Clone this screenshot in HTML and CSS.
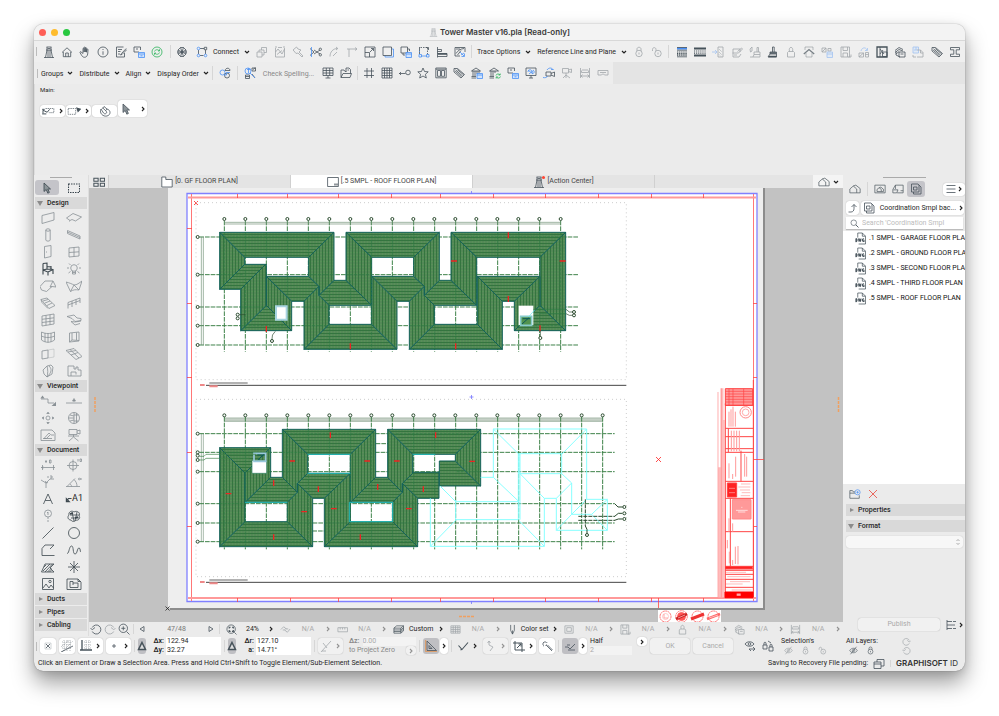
FILE: index.html
```html
<!DOCTYPE html>
<html lang="en">
<head>
<meta charset="utf-8">
<title>Tower Master v16.pla</title>
<link rel="stylesheet" href="styles.css">
</head>
<body>
<svg class="defs" aria-hidden="true">
  <defs>
    <symbol id="tower" viewBox="0 0 12 12"><path d="M3.5 1h5M4 1v3M8 1v3M3 4h6M4 4L2.5 11.5M8 4l1.500 7.500M5 4v7M7 4v7M1 11.500h10M4.500 2.500h3"/></symbol>
    <symbol id="home" viewBox="0 0 12 12"><path d="M1 6.500L6 1.800l5 4.700M2.300 6v4.700h7.400V6M4.700 10.700V7h2.600v3.700"/></symbol>
    <symbol id="hand" viewBox="0 0 12 12"><path d="M4 7.500V2.800c0-.9 1.100-.9 1.100 0V6 1.700c0-.9 1.200-.9 1.200 0V6 2.300c0-.9 1.200-.9 1.200 0V6.200l.4-2.700c.1-.8 1.200-.6 1.100.2L8.700 8c-.3 2-1.500 3.300-3.200 3.300S3 10 2.300 8.800L1 6.500c-.3-.8.600-1.100 1.100-.5z"/></symbol>
    <symbol id="info" viewBox="0 0 12 12"><circle cx="6" cy="6" r="5"/><path d="M6 5.300v3.500M6 3v1"/></symbol>
    <symbol id="edit" viewBox="0 0 12 12"><path d="M8.500 1H1.500v10h8V7M3 3.500h4M3 5.500h2.500M3 8h2M11.200 2.500L6.500 7.500 5.500 9l1.700-.7 4.600-4.700"/></symbol>
    <symbol id="link" viewBox="0 0 12 12"><path d="M6 6H1V1h6.500v3M3 3h2"/><path class="b f" d="M5.500 6.500h6v5h-6zM5.500 8h6M7.500 9.800h2"/></symbol>
    <symbol id="sync" viewBox="0 0 12 12"><g class="g"><circle cx="6" cy="6" r="5"/><path d="M3.500 5.500C4 3.500 7 3 8.300 5M8.500 3.300V5H7M8.500 6.500C8 8.500 5 9 3.700 7M3.500 8.700V7H5"/></g></symbol>
    <symbol id="globe" viewBox="0 0 12 12"><path d="M2 4l2.500-2.500h3L10 4v4l-2.500 2.500h-3L2 8zM2 4l8 4M2 8l8-4M4.500 1.500L6 6l1.500-4.500M4.500 10.500L6 6l1.500 4.500M1 6h10"/></symbol>
    <symbol id="nodes" viewBox="0 0 12 12"><path d="M4 2.500h4M9.500 4v4M4 9.500h3.500M2.500 4v4"/><g class="b"><circle cx="2.500" cy="2.500" r="1.300"/><circle cx="2.500" cy="9.500" r="1.300"/><circle cx="9.500" cy="9.500" r="1.300"/></g><path d="M8.300 1.300h2.400v2.400H8.300z"/></symbol>
    <symbol id="boxes" viewBox="0 0 12 12"><path d="M1 6h5v5H1zM3 6V4h5v5H6M5.500 4V1.500h5v5H8"/></symbol>
    <symbol id="mod" viewBox="0 0 12 12"><path d="M1.500 2v9h9V2M1.500 6L4 3l4 5 2.500-5M1 1h2M9 1h2M4 1.500h4M3 8.500l5-4"/></symbol>
    <symbol id="axe" viewBox="0 0 12 12"><path d="M1 4l3.500-3L6 3l3 1-2 2 4 4-1 1-4-4-2 .5-2-2.500z"/></symbol>
    <symbol id="cut" viewBox="0 0 12 12"><path d="M4 4l6 4M4 8l6-4M0 2.500L4 6 0 9.500" /><circle cx="10.300" cy="8.800" r="1.200"/><circle cx="10.300" cy="3.300" r="1.200"/><path class="b" d="M1.500 1v10"/></symbol>
    <symbol id="arc" viewBox="0 0 12 12"><path d="M2 10.500C2 6 5 2.500 9.500 2.500M8 1l1.800 1.500L8 4M5 10l4-4"/></symbol>
    <symbol id="corner" viewBox="0 0 12 12"><path d="M3 11V3h8M9 1.500L11 3 9 4.500M1 3h2"/></symbol>
    <symbol id="resize" viewBox="0 0 12 12"><path d="M1 1h10v10H1zM1 6.500h4.500V11M6 6l3.500-3.500M7 2.500h2.500V5"/></symbol>
    <symbol id="frame" viewBox="0 0 12 12"><path class="b" d="M3 9.500v1.500h8.500V3H9.500"/><path d="M1 1h8.500v8.500H1z"/></symbol>
    <symbol id="frame2" viewBox="0 0 12 12"><path d="M1 1h6.500v6H1zM3 7v2h2M7.500 3h2v2"/><path class="b f" d="M6 6.500h5.500v5H6zM6 8h5.500"/></symbol>
    <symbol id="bound" viewBox="0 0 12 12"><path d="M2.500 1.500h7v7" stroke-dasharray="1.500 1"/><path d="M1.500 1v7M8 1.500h2.500V4"/><path class="b" d="M3 10h6M1 8.500h2.500V11H1zM8.500 8.500H11V11H8.500zM1.500 5v1"/></symbol>
    <symbol id="move" viewBox="0 0 12 12"><path d="M2 3h7v7H2zM0 3h2M9 10h3M2 1v2M9 10v2M4 8l4-4M5.500 4H8v2.500" stroke-width="1"/></symbol>
    <symbol id="align" viewBox="0 0 12 12"><path d="M1.500 1v10.500M1.500 3.500h4v2h-4M1.500 7.500h9.500v3H1.500"/><path d="M2 8h9" stroke-width="1.500"/></symbol>
    <symbol id="trace" viewBox="0 0 12 12"><path d="M11 6V1.500H1v8.500h5M2 7.500c2-3 4-4.500 8-5M3.500 9L7 4.500M2 3h4"/><path class="b" d="M6 6l4 4M10.500 7.500v3h-3M7 9l3-2"/></symbol>
    <symbol id="lock" viewBox="0 0 12 12"><circle cx="6" cy="7.500" r="3.200"/><path d="M4 5V3c0-2.300 4-2.300 4 0v2M6 6.500v2"/></symbol>
    <symbol id="unlock" viewBox="0 0 12 12"><circle cx="7" cy="7.500" r="3.200"/><path d="M5 5V3.500c0-2.500-3.500-2.500-3.500 0V5M7 6.500v2"/></symbol>
    <symbol id="hatch1" viewBox="0 0 12 12"><path class="b" d="M1 2.500h10" stroke-width="2"/><path d="M1 1.500h10M1 4.200h10M1 10.800h10"/><path d="M1 6h10M1 7.600h10M1 9.200h10" stroke-width="1.200" stroke-dasharray="1.300 .8"/></symbol>
    <symbol id="hatch2" viewBox="0 0 12 12"><path d="M0 2.500h12M0 9.500h12" stroke-width="1.800"/><path d="M0 5h12M0 7.200h12" stroke-width="1.200" stroke-dasharray="1 .9"/></symbol>
    <symbol id="door" viewBox="0 0 12 12"><path d="M6 1h5v10H6z"/><path d="M7 3l3 3M7 6l3 3M7 8.500l2 2" stroke-dasharray="1 .8"/><path class="b" d="M0 6h5M3 4l2 2-2 2"/></symbol>
    <symbol id="note" viewBox="0 0 12 12"><path d="M2 3h7v3M2 3v8h6l2-3M1.500 7h6l4-4-1-1-4 3.500M3 9h3"/></symbol>
    <symbol id="brushes" viewBox="0 0 12 12"><path d="M1 3l2-2v4l-1.500 1zM5 6h6v2.500H5zM8 6V1.500h1.500V6M5 8.500L4 11h7V8.500M1 11h3"/></symbol>
    <symbol id="brush" viewBox="0 0 12 12"><path d="M3 6h6.500v2H3zM5.500 6V1h1.700v5M3 8L1 11h8.500V8"/><path d="M1.500 10.500h8M3 7h6" stroke-width="1.500"/></symbol>
    <symbol id="person" viewBox="0 0 12 12"><path d="M2.500 11V6.500l1-1h5l1 1V11z"/><path d="M4.500 5.500C3 0 9 0 7.500 5.500"/></symbol>
    <symbol id="roof" viewBox="0 0 12 12"><path d="M2 1h8M2 1v3M10 1v3M3 7v4h6V7" stroke-opacity=".6"/><path d="M.8 8L6 3.500 11.200 8" stroke-width="1.300"/></symbol>
    <symbol id="units" viewBox="0 0 12 12"><path d="M1 2h4v4H1zM1 6l4-4M7 5V2.500h3V5z"/><path class="b f" d="M6 6h5.500v5.500H6zM6 8h5.500"/></symbol>
    <symbol id="disk" viewBox="0 0 12 12"><path d="M1 1h8.500v10H1zM3 1v3.500h4.500V1M3 11V7h4.500v4M11 8.500V11H8.500"/></symbol>
    <symbol id="swap" viewBox="0 0 12 12"><path d="M1 7h4.500v4H1zM1 11l4.500-4M7.500 6.500h3V11h-3zM7.500 8.500h3"/><path class="b" d="M3 5C4 1 8 1 9 4M9.500 2v2.500H7"/></symbol>
    <symbol id="photo" viewBox="0 0 12 12"><path d="M1 1h10v10H1z" stroke-width="1.300"/><path d="M4 1v10M4 3l4 5M4 8L7 4M6.500 6h4.500v4.500H6.500z"/></symbol>
    <symbol id="stack" viewBox="0 0 12 12"><path d="M1 4.500L5 1.500l4 2M1 6.500l4-3 4 1.500M2 8l3-2.500M2 5v4l4 2M5 6h6v5H5zM6.500 8h3"/></symbol>
    <symbol id="docs" viewBox="0 0 12 12"><path class="b f" d="M1 1h5.500v6H1zM4 1v3M2 4h3"/><path d="M5 4h3.500L11 6.500V11H5M8.500 4v3H11M1 9v2h3"/></symbol>
    <symbol id="clip" viewBox="0 0 12 12"><path d="M1 1.500h3.500l7 6-3.500 3.500L1 5zM2.500 2.800l7 6.200M4.200 2.500L10.800 8M2.200 4.200L8.500 9.800"/></symbol>
    <symbol id="ibeam" viewBox="0 0 12 12"><path d="M1.500 1.500h9v2.300H7.200v4.400h3.300v2.300h-9V8.200h3.300V3.800H1.500z"/></symbol>
    <symbol id="rings" viewBox="0 0 12 12"><path d="M6 3.500h5C11 1 7 0 6 3.500z"/><circle class="b" cx="3.500" cy="5.500" r="2.500"/><circle cx="8" cy="8.500" r="2.500"/><path class="b" d="M5 8h2.500V5.500H11"/></symbol>
    <symbol id="find" viewBox="0 0 12 12"><path d="M8 1h3.500v3H8zM9 2.500l2.500-2M1.500 8h4v3.500h-4zM1.500 9.500h4M8 7l3 4"/><path class="b" d="M3 2.500h3M4.500 1v5"/><circle class="b" cx="4" cy="4" r="3"/><path class="b" d="M6 6l5 5"/></symbol>
    <symbol id="board" viewBox="0 0 12 12"><path d="M1 1h10v7.500H1zM1 3.500h10M1 6h10M4.300 1v7.500M7.700 1v7.500M6 8.500V11M3.500 11h5"/></symbol>
    <symbol id="folder" viewBox="0 0 12 12"><path d="M1 10.500V3h3l1 1.500h1.500M1 10.500L3 6.500h8.500L10 10.500zM6 4.500V1h3l1.500 1.500v4M7.500 3h1.500"/></symbol>
    <symbol id="hash" viewBox="0 0 12 12"><path d="M1 4h10M1 8.500h10M4 1v10M8.500 1v10"/></symbol>
    <symbol id="grid" viewBox="0 0 12 12"><path d="M1 1h10v10H1zM1 3.500h10M1 6h10M1 8.500h10M3.500 1v10M6 1v10M8.500 1v10"/></symbol>
    <symbol id="guide" viewBox="0 0 12 12"><circle cx="9" cy="5.500" r="2.300"/><path d="M0 6.500h6.500M2 5L.5 6.500 2 8"/></symbol>
    <symbol id="star" viewBox="0 0 12 12"><path d="M6 1l1.500 3.500 3.700.3-2.800 2.500.9 3.700L6 9l-3.300 2 .9-3.700L.8 4.800l3.700-.3z"/></symbol>
    <symbol id="cols" viewBox="0 0 12 12"><path d="M.8 1h10.400v9.800H.8zM2.500 3.500h3v5.800h-3zM6.500 3.500h3v5.800h-3zM1 2.200h10"/></symbol>
    <symbol id="bank" viewBox="0 0 12 12"><path d="M.5 4L5 1l4.500 3zM2 4v5M4 4v5M6 4v3M8 4v2M.5 9.500H5M.5 11H5"/><path class="b f" d="M6 6.500h5.500v5H6zM6 8h5.500"/></symbol>
    <symbol id="bank2" viewBox="0 0 12 12"><path d="M.5 4L5 1l4.500 3zM2 4v5M4 4v5M6 4v2M.5 9.500H5M.5 11H5"/><path class="g" d="M7 8.500c.5-2 3-2 4-.5M11.200 6.500V8H9.500M11.500 9.500c-.5 2-3 2-4 .5M7.200 11.500V10H9"/></symbol>
    <symbol id="screen" viewBox="0 0 12 12"><path d="M1 1h10v7.500H1zM4 11h4M6 8.500V11" /><path class="b" d="M3 5c0-3 4-3 4 0s3 1 2-1M4 7l5-4M3 3l5 4"/></symbol>
    <symbol id="cam" viewBox="0 0 12 12"><path d="M3 5h5v4H3zM8 6.500L11.500 5v4.500L8 8"/><path class="b" d="M4 3c2-3 5-2 6-.5M0 10.500c2 .5 4 0 4.500-1.500M8 2.500h2.500"/></symbol>
    <symbol id="tripod" viewBox="0 0 12 12"><path d="M1.500 1.500h6v4.500h-6zM7.500 3l3-1v3.500l-3-1M5 6v2M5 8L2 11M5 8l4 3M5 8v3"/></symbol>
    <symbol id="width" viewBox="0 0 12 12"><path d="M1.500 1v10M10.500 1v10M3 3h6M1.500 9h9M3.500 7.500L2 9l1.500 1.500M8.500 7.500L10 9l-1.500 1.500M2.500 3.500v2h7v-2"/></symbol>
    <symbol id="vr" viewBox="0 0 12 12"><path d="M1 3.500h10v4.500H7.500L6.500 7h-1l-1 1H1zM3 5.500h6"/></symbol>
    <symbol id="chev" viewBox="0 0 6 6"><path d="M1 2l2 2 2-2" stroke-width="1.200"/></symbol>
    <symbol id="chevr" viewBox="0 0 6 6"><path d="M2 1l2 2-2 2" stroke-width="1.100"/></symbol>
    <symbol id="arrow" viewBox="0 0 12 12"><path d="M3 1v8.500l2.200-2 1.600 3.700 1.600-.8L6.800 7H9.500z" fill="#8d9599"/></symbol>
    <symbol id="marq" viewBox="0 0 12 12"><path d="M0.500 2h11v8.500h-11z" stroke-dasharray="1.500 1" stroke-width="1.100"/></symbol>
    <symbol id="selmode" viewBox="0 0 16 12"><path d="M5 3h10v5H9" stroke-dasharray="1.700 .8"/><path d="M1 9.500h5M1 4h3M2 9V5l5 2.500L10 4" stroke-width="1.200"/></symbol>
    <symbol id="selmarq" viewBox="0 0 16 12"><path d="M1 3h9v7H1z" stroke-dasharray="1.700 1"/><path d="M12 3l3 1-2 2z" stroke-width="2"/></symbol>
    <symbol id="magnet" viewBox="0 0 12 12"><path d="M2 4c-2 4 2 8 6 7s4-6 0-7L5 1.500 3.800 3 7 6c2 2-1 4-2.500 2L2 4M4 2.800l-1 1M8 4L7 5.500"/></symbol>
    <symbol id="views" viewBox="0 0 14 12"><path d="M1 1.500h5v3.500H1zM8.500 1.500h5v3.500h-5zM1 7.500h5V11H1zM8.500 7.500h5V11h-5z" stroke-width="1.200"/></symbol>
    <symbol id="plan" viewBox="0 0 12 12"><path d="M.8 1h4v2.500h6.400V11H.8z" fill="#fff"/></symbol>
    <symbol id="layout" viewBox="0 0 12 12"><path d="M.6 1.500h10.800v9H.6z"/><path d="M7 8.500h4" stroke-width="2.200" stroke-opacity=".6"/></symbol>
    <!-- design tools -->
    <symbol id="wall" viewBox="0 0 16 14"><path d="M2 4.500l12-3v7.500L2 12.500z"/></symbol>
    <symbol id="slab" viewBox="0 0 16 14"><path d="M.5 7L7 2.500l8.500 3.500-6 4-3.500-1.500-2 1zM3.500 9.500v1"/></symbol>
    <symbol id="column" viewBox="0 0 16 14"><ellipse cx="8" cy="2" rx="2.200" ry="1.200"/><path d="M5.800 2v10c0 1.500 4.400 1.500 4.400 0V2"/></symbol>
    <symbol id="beam" viewBox="0 0 16 14"><path d="M1.500 2.500L14 8v3L1.500 5.500zM1.500 4L14 9.500"/></symbol>
    <symbol id="doorT" viewBox="0 0 16 14"><path d="M4.500 1.500l6.500-1v11l-6.500 1.500zM6 7h1"/></symbol>
    <symbol id="window" viewBox="0 0 16 14"><path d="M3 3l10-1v9L3 12zM8 2.500v9M3 7.500l10-.7"/></symbol>
    <symbol id="chair" viewBox="0 0 16 14"><path d="M3 1.500L7 1v6l6 .5V12M3 1.500V12.500M3 8l5 2v3.500M7 7L3 8M8 10l5-2.500M11 4v3M7 4.500l4 .5" stroke-width="1.100"/></symbol>
    <symbol id="lamp" viewBox="0 0 16 14"><circle cx="8" cy="6" r="3.300"/><path d="M6.500 9v3h3V9M6.500 10.500h3M1 6h2M13 6h2M3 1.500l1.500 1.500M13 1.500L11.500 3M2.500 11l2-1.500M13.500 11l-2-1.500"/></symbol>
    <symbol id="roofT" viewBox="0 0 16 14"><path d="M0 7.500L5 2h8l3 6-4-.5L6.500 12.500 1.500 11zM13 2l-3 6 2-.5"/></symbol>
    <symbol id="shell" viewBox="0 0 16 14"><path d="M0 3c4 1 6 2 8 3 3 0 5-2 8-4l-3 9L8 6 4.500 12.500zM4.500 12.500c3-2 5-2 8.500-1.500"/></symbol>
    <symbol id="stair" viewBox="0 0 16 14"><path d="M1 3.500L7 2l8 7.500-6 3zM3 5l5-1.500M5 7l5-2M7 9.500l5-2.500M1 3.500l1 3 6 6"/></symbol>
    <symbol id="rail" viewBox="0 0 16 14"><path d="M2 6.500L14 2v5M2 6.500v6M2 9l12-4.500M6 5v6M10 3.500v5.500"/></symbol>
    <symbol id="curtain" viewBox="0 0 16 14"><path d="M2 3l12-2v10L2 13zM6 2.300v10M10 1.700v10M2 6.300l12-1.500M2 9.500L14 8"/></symbol>
    <symbol id="zone" viewBox="0 0 16 14"><path d="M1 3.500L8 2l3 3 4 .5v2L9 8.500 6 5.500zM5 8.500l4 .5 6-1M5 8.500l4 3.500 5-1.500"/></symbol>
    <symbol id="curt2" viewBox="0 0 16 14"><path d="M1.500 2c4 2 9 2 13 0v8c-4 3-9 3-13 0zM5 3v9M8 3.500v9M11 3v9M1.500 6c4 2 9 2 13 0"/></symbol>
    <symbol id="open" viewBox="0 0 16 14"><path d="M3.500 3L13 2v9l-9.500 1zM6 3v7l7 .5M6 10l-2.500 2M10.500 2.500V10"/></symbol>
    <symbol id="panel" viewBox="0 0 16 14"><path d="M2 4l6-1v8l-6 1z"/><path d="M8 3l6-1v8l-6 1" stroke-opacity=".4"/></symbol>
    <symbol id="mesh" viewBox="0 0 16 14"><path d="M0 3.500l8-2 8 8-6 3zM4 2.500l9 8.500M2 5l8-1.500M5 8l7-2.500"/></symbol>
    <symbol id="morph" viewBox="0 0 16 14"><path d="M3 6l4-4 4-1 2 2-1 7-5 3-3-3zM7 2c1 4 1 7 0 11M9 2c3 3 3 6-2 11"/></symbol>
    <symbol id="obj" viewBox="0 0 16 14"><path d="M2 2h6v3h2V3h2v3h3v6H2zM5 8v4M5 8h5v2.500"/></symbol>
    <symbol id="section" viewBox="0 0 16 14"><path d="M1 5h7v4h6"/><path d="M1.500 4h2L2.500 2.500zM13 11.500h2.500v-2.500z" stroke-width="1.200"/></symbol>
    <symbol id="elev" viewBox="0 0 16 14"><path d="M0 9h16M6.500 7h3L8 4.500z"/><path d="M7 6.500h2" stroke-width="1.500"/></symbol>
    <symbol id="inter" viewBox="0 0 16 14"><circle cx="8" cy="7" r="2"/><path d="M2 7h1.500M12.500 7H14M8 1v2M8 11v2M3.500 5.800v2.400L2.300 7zM12.500 5.800v2.400L13.700 7zM6.800 2.500h2.400L8 1.300zM6.800 11.500h2.400L8 12.700z"/></symbol>
    <symbol id="ballT" viewBox="0 0 16 14"><circle cx="8" cy="7" r="5.500"/><path d="M8 1.500v11M2.500 7H8M4 4l4 1M4 10l4-1M8 4h4.500M8 10h4.500M10.500 2v10"/></symbol>
    <symbol id="detail" viewBox="0 0 16 14"><path d="M1 2h11l3 3v7.500H1zM4 10.500L9 5l1.500 1.500-4 4zM3 10.500h9M11 7h3"/></symbol>
    <symbol id="camT" viewBox="0 0 16 14"><path d="M3 1.500h8v5H3zM11 3l3-1v4l-3-1M2 8h11M7.500 6.500V9L3 13M7.500 9l5 4"/></symbol>
    <symbol id="dim" viewBox="0 0 16 14"><path d="M1 9.500h14M2.500 7v5M13.500 7v5M5 3.500h2M6 2v3M9.500 2v3h1.500V2zM3 10.500l-1-1 1-1"/></symbol>
    <symbol id="level" viewBox="0 0 16 14"><circle cx="7" cy="7.500" r="4"/><path d="M1 7.500h12M7 1.500v12M12 1v2.500M14 1h1.500v2.500H14z"/></symbol>
    <symbol id="radial" viewBox="0 0 16 14"><path d="M1 5l5 3M6 13V8l4-4h4M8 3V1M10 1h2v2h-2M6 8l2-.5M6 8l-.5-2"/></symbol>
    <symbol id="angle" viewBox="0 0 16 14"><path d="M0 11.500h14M1 11.500l8-8M8 4.500c2 2 3 4 3 7M4 9c1 .5 1.500 1.500 1.500 2.500M15.500 3l-2 2c-1.500 0-1.500-2 0-2l2 2"/></symbol>
    <symbol id="textT" viewBox="0 0 16 14"><path d="M3.500 12L8 2l4.500 10M5.200 8.500h5.600"/></symbol>
    <symbol id="leader" viewBox="0 0 8 14"><path d="M1.500 9.500l2.500-3h3.500M1.500 6.500v3.500h3.500z" stroke-width="1.200"/></symbol>
    <symbol id="gridT" viewBox="0 0 16 14"><circle cx="8" cy="4.500" r="3.500"/><path d="M8 3v3M7 4l1-1"/><path d="M8 8v6" stroke-dasharray="2 1"/></symbol>
    <symbol id="change" viewBox="0 0 16 14"><path d="M3 6c-1-3 3-5 5-3 3-2 7 1 5 4 2 2-1 5-3 4-1 2-4 2-5 0-3 0-4-3-2-5zM4 6h9M5 9h8M6 3l2 9M11 3l-2 9"/><path d="M4 5l3-1M9 9l3-1" stroke-width="1.800"/></symbol>
    <symbol id="line" viewBox="0 0 16 14"><path d="M2.500 12.500L13.500 1.500"/></symbol>
    <symbol id="circ" viewBox="0 0 16 14"><circle cx="8" cy="7" r="5.500"/></symbol>
    <symbol id="poly" viewBox="0 0 16 14"><path d="M2 12.500h12.500M2 12.500v-7l3-3.500h9l-4 4"/></symbol>
    <symbol id="spline" viewBox="0 0 16 14"><path d="M1 10c2 2 2-7 4.500-7s1 8 3.500 8 2-6 4-6 .5 4 2 4"/></symbol>
    <symbol id="fill" viewBox="0 0 16 14"><path d="M1.500 12L5 4h9l-4 4 4 4zM3 11l7-7M5 12l7.500-8M7.500 12l4-4M9.500 12l2-2M4 7l2-2"/></symbol>
    <symbol id="hot" viewBox="0 0 16 14"><path d="M8 1v12M2 7h12M4 3l8 8M12 3l-8 8"/></symbol>
    <symbol id="fig" viewBox="0 0 16 14"><path d="M2.500 1.500h11v11h-11zM3 11l3-4 3 4 2-3 2.500 3"/><circle cx="10" cy="4.500" r="1.200"/></symbol>
    <symbol id="draw" viewBox="0 0 16 14"><path d="M1 2h11l3 3v7.500H1zM4 4.500h3v1.500h5v4.500H4zM7 6v2M12 2v2.500h2.500"/></symbol>
    <!-- navigator -->
    <symbol id="proj" viewBox="0 0 14 12"><path d="M1 10.500V6l4-3.500L9 6v4.500zM5 2.500L8 1.500l5 4v5H9"/></symbol>
    <symbol id="vmap" viewBox="0 0 14 12"><path d="M1 1.500h12v9H1zM3.500 9V6.500l2.500-2 2.500 2V9zM6 4.500l2-.7 3 2.500V9H8.500"/></symbol>
    <symbol id="lbook" viewBox="0 0 14 12"><path d="M4 1.500h9v9H6M4 1.500L1 6.500v4h4.500L7 7H1.500M4 1.500V6M10 8h3"/></symbol>
    <symbol id="pubs" viewBox="0 0 12 12"><path d="M1.500 1h6.500l1 1v7H1.500zM3.500 9v2H11V4L9 2M3.500 4h3.500v3H3.500z"/></symbol>
    <symbol id="up" viewBox="0 0 12 12"><path d="M1.500 10h2.500c2 0 3-1.500 3-3.500V2.500M4.500 5L7 2.500 9.500 5"/></symbol>
    <symbol id="mag" viewBox="0 0 12 12"><circle cx="5" cy="5" r="3.700"/><path d="M7.800 7.800L11.300 11.300" stroke-width="1.200"/></symbol>
    <symbol id="dwg" viewBox="0 0 12 14"><path d="M3 6V1h5l3.500 3.500V13H4M8 1v3.500h3.500"/><path d="M1 7v3.500c1.500.3 1.800-3.500 0-3.500M3.800 7l.6 3.500.8-2.500.8 2.500.6-3.500M9.800 7.500C7.500 6.500 7.500 11 9.800 10.300V9H9" stroke-width="1.100"/></symbol>
    <symbol id="newf" viewBox="0 0 14 12"><path d="M7 3.500H5L4 2H1v9h11V7.500M1 5h6"/><g class="b"><circle cx="10" cy="4" r="3"/><path d="M10 2.500v3M8.500 4h3"/></g></symbol>
    <symbol id="cross" viewBox="0 0 12 12"><path d="M2 2l8 8M10 2l-8 8" stroke-width="1"/></symbol>
    <symbol id="tree" viewBox="0 0 12 12"><path d="M1 1v10M1 2.500h5M1 6h8M1 9.500h5M7 2.500h3M7 9.500h3"/></symbol>
    <symbol id="menu" viewBox="0 0 12 12"><path d="M1.500 2.500h9M1.500 6h9M1.500 9.500h9"/></symbol>
    <!-- bottom bars -->
    <symbol id="undo" viewBox="0 0 12 12"><path d="M2.300 4.500a4.500 4.500 0 1 1 0 4M.5 5.500l2 1 2.500-2"/></symbol>
    <symbol id="redo" viewBox="0 0 12 12"><path d="M9.700 4.500a4.500 4.500 0 1 0 0 4M11.500 5.500l-2 1L7 4.500"/></symbol>
    <symbol id="zin" viewBox="0 0 12 12"><circle cx="5.300" cy="5.300" r="4.200"/><path d="M8.500 8.500l3 3M3.300 5.300h4M5.300 3.300v4"/></symbol>
    <symbol id="zfit" viewBox="0 0 12 12"><circle cx="5.600" cy="5.600" r="4.600"/><path d="M9 9l2.500 2.500"/><path d="M3.500 5V3.500H5M6.500 3.500H8V5M8 6.500V8H6.500M5 8H3.500V6.500" stroke-width="1.200"/></symbol>
    <symbol id="tril" viewBox="0 0 12 12"><path d="M8 3.500v5L4 6z"/></symbol>
    <symbol id="trir" viewBox="0 0 12 12"><path d="M4 3.500v5L8 6z"/></symbol>
    <symbol id="rot" viewBox="0 0 12 12"><path d="M1 6l3-3 3 2.500M11 5.500L8 9 5 6.500M3 6.500h3M6 5l3 .5"/></symbol>
    <symbol id="ruler" viewBox="0 0 12 12"><path d="M1 4h10.500v4.500H1zM3.500 4v2M6 4v2M8.500 4v2"/></symbol>
    <symbol id="layers" viewBox="0 0 12 12"><path d="M1 4.500l3-2.500h7.500L8.500 4.500zM1 4.500V10h7.500V4.500M11.500 2v5.500L8.500 10M1 6.500h7.500l3-2.500M1 8.200h7.500l3-2.500"/></symbol>
    <symbol id="tiles" viewBox="0 0 12 12"><path d="M1 2h10v8H1zM1 4h10M1 6h10M1 8h10M3.500 2v8M8.500 2v8M6 2v8"/></symbol>
    <symbol id="pen" viewBox="0 0 12 12"><path d="M4 1v6l2 4 2-4V1M6 7v4"/></symbol>
    <symbol id="pens" viewBox="0 0 12 12"><path d="M1 2h9v8H1zM3 4h5v4H3z"/></symbol>
    <symbol id="xmark" viewBox="0 0 12 12"><path d="M4 4l4 4M8 4L4 8"/><path d="M3 3h6v6H3z" stroke-opacity=".3"/></symbol>
    <symbol id="snap" viewBox="0 0 12 12"><path d="M0 12L12 6"/><path d="M0 7L8 0M1 12L12 1M1 2h10M1 5h10M1 8h10M3 0v12M6 0v12M9 0v12" stroke-opacity=".5" stroke-dasharray="1 1"/></symbol>
    <symbol id="origin" viewBox="0 0 12 12"><path d="M2 0v10h10M0 10h2" stroke-width="1.300"/><path d="M4 2h8M4 5h8M4 8h8M6 0v10M9 0v10" stroke-opacity=".5" stroke-dasharray="1 1"/></symbol>
    <symbol id="plus" viewBox="0 0 12 12"><path d="M6 4v4M4 6h4"/></symbol>
    <symbol id="delta" viewBox="0 0 12 12"><path d="M6 2.500L9.500 9.500h-7z" fill="#ddd" stroke-width="1.500"/></symbol>
    <symbol id="slash" viewBox="0 0 12 12"><path d="M1 12L11 1M2 11h4M3 3l4 5"/></symbol>
    <symbol id="set" viewBox="0 0 12 12"><path d="M2 1v9.500h9.500z"/><path d="M4 5.500v3h3z"/><path d="M.7 0v11.700H12" class="o"/></symbol>
    <symbol id="check" viewBox="0 0 12 12"><path d="M1.500 5.500L5 9.500 11 2.500M3.500 10l2-1" stroke-width="1.100"/></symbol>
    <symbol id="sloped" viewBox="0 0 12 12"><path d="M1 7h3l2 2 5-5M4 10h7M3 5h3"/></symbol>
    <symbol id="path" viewBox="0 0 12 12"><path d="M4 1v4l4 2-3 4M2.500 3L4 1l1.500 2"/></symbol>
    <symbol id="wand" viewBox="0 0 12 12"><path d="M5 5l6 6M6.500 5l5 5M4 1v2M1 4h2M2 2l1 1M6 2L5.500 3M2 6l1-.5M4.500 5.500l1-1"/></symbol>
    <symbol id="eye" viewBox="0 0 12 12"><path d="M1 6c2-4 8-4 10 0-2 4-8 4-10 0zM10 1L2 11"/><circle cx="6" cy="6" r="1.600"/></symbol>
    <symbol id="eyes" viewBox="0 0 12 12"><path d="M1 4c2-3 7-3 9 0-2 3-7 3-9 0zM5 9h6M9 7l2 2-2 2M5 9l2 2"/><circle cx="5.500" cy="4" r="1.300"/></symbol>
    <symbol id="locks" viewBox="0 0 12 12"><path d="M1 5h4v4H1zM2 5V3c0-1 2-1 2 0v2M7 7h4v4H7zM8 7V5c0-1 2-1 2 0v2M6 1l3 2"/></symbol>
    <symbol id="copy" viewBox="0 0 12 12"><path d="M1 4h7v6.500H1zM4 4V1.500h7V8H8M1 6h7"/></symbol>
    <pattern id="hh" width="9" height="9" patternUnits="userSpaceOnUse"><path d="M0 0h9v9H0z" fill="#5a9956"/><path d="M0 4.500h9" stroke="#34753f" stroke-width="3"/></pattern>
    <pattern id="hv" width="9" height="9" patternUnits="userSpaceOnUse"><path d="M0 0h9v9H0z" fill="#5a9956"/><path d="M4.500 0v9" stroke="#34753f" stroke-width="3"/></pattern>
    <g id="bub"><circle r="4.500"/></g>
    <g id="row9"><use href="#bub"/><use href="#bub" x="63"/><use href="#bub" x="126"/><use href="#bub" x="189"/><use href="#bub" x="252"/><use href="#bub" x="315"/><use href="#bub" x="378"/><use href="#bub" x="441"/></g>
  </defs>
</svg>

<main class="window">
  <header class="titlebar">
    <span class="light red"></span><span class="light yellow"></span><span class="light green"></span>
    <h1><svg class="ic pale"><use href="#tower"/></svg>Tower Master v16.pla [Read-only]</h1>
  </header>

  <nav class="toolbar first" aria-label="Standard">
    <i class="grip"></i>
    <div class="group start">
      <button><svg class="ic"><use href="#tower"/></svg></button><button><svg class="ic"><use href="#home"/></svg></button><button><svg class="ic"><use href="#hand"/></svg></button><button><svg class="ic"><use href="#info"/></svg></button><button><svg class="ic"><use href="#edit"/></svg></button><button><svg class="ic"><use href="#link"/></svg></button><button><svg class="ic"><use href="#sync"/></svg></button>
    </div>
    <i class="sep"></i>
    <div class="group model"><button><svg class="ic"><use href="#globe"/></svg></button></div>
    <button class="drop"><svg class="ic"><use href="#nodes"/></svg><span>Connect</span><svg class="ch"><use href="#chev"/></svg></button>
    <div class="group">
      <button disabled><svg class="ic"><use href="#boxes"/></svg></button><button disabled><svg class="ic"><use href="#mod"/></svg></button><button disabled><svg class="ic"><use href="#axe"/></svg></button><button><svg class="ic"><use href="#cut"/></svg></button><button disabled><svg class="ic"><use href="#arc"/></svg></button><button disabled><svg class="ic"><use href="#corner"/></svg></button><button><svg class="ic"><use href="#resize"/></svg></button><button><svg class="ic"><use href="#frame"/></svg></button><button><svg class="ic"><use href="#frame2"/></svg></button><button><svg class="ic"><use href="#bound"/></svg></button><button><svg class="ic"><use href="#align"/></svg></button><button><svg class="ic"><use href="#trace"/></svg></button>
    </div>
    <i class="sep wide-sep"></i>
    <button class="drop"><span>Trace Options</span><svg class="ch"><use href="#chev"/></svg></button>
    <button class="drop"><span>Reference Line and Plane</span><svg class="ch"><use href="#chev"/></svg></button>
    <div class="group"><button disabled><svg class="ic"><use href="#lock"/></svg></button><button disabled><svg class="ic"><use href="#unlock"/></svg></button></div>
    <i class="sep wide-sep"></i>
    <div class="group spread">
      <button><svg class="ic"><use href="#hatch1"/></svg></button><button><svg class="ic"><use href="#hatch2"/></svg></button><button disabled><svg class="ic"><use href="#door"/></svg></button><button disabled><svg class="ic"><use href="#note"/></svg></button><button disabled><svg class="ic"><use href="#brushes"/></svg></button><button><svg class="ic"><use href="#brush"/></svg></button><button disabled><svg class="ic"><use href="#person"/></svg></button><button disabled class="mid"><svg class="ic"><use href="#roof"/></svg></button><button disabled><svg class="ic"><use href="#units"/></svg></button><button disabled><svg class="ic"><use href="#disk"/></svg></button><button disabled><svg class="ic"><use href="#swap"/></svg></button><button><svg class="ic"><use href="#photo"/></svg></button><button><svg class="ic"><use href="#stack"/></svg></button><button disabled><svg class="ic"><use href="#docs"/></svg></button><button><svg class="ic"><use href="#clip"/></svg></button><button><svg class="ic"><use href="#ibeam"/></svg></button>
    </div>
  </nav>

  <nav class="toolbar second" aria-label="Arrange">
    <div class="strip">
      <i class="grip"></i>
      <button class="drop"><span>Groups</span><svg class="ch"><use href="#chev"/></svg></button>
      <button class="drop"><span>Distribute</span><svg class="ch"><use href="#chev"/></svg></button>
      <button class="drop"><span>Align</span><svg class="ch"><use href="#chev"/></svg></button>
      <button class="drop"><span>Display Order</span><svg class="ch"><use href="#chev"/></svg></button>
      <i class="sep"></i>
      <button class="pad"><svg class="ic"><use href="#rings"/></svg></button>
      <i class="sep"></i>
      <button class="pad"><svg class="ic"><use href="#find"/></svg></button>
      <button class="drop spell"><span>Check Spelling...</span></button>
      <button><svg class="ic"><use href="#board"/></svg></button><button><svg class="ic"><use href="#folder"/></svg></button>
      <i class="sep wide-sep"></i>
      <div class="group"><button><svg class="ic"><use href="#hash"/></svg></button><button><svg class="ic"><use href="#grid"/></svg></button><button><svg class="ic"><use href="#guide"/></svg></button><button><svg class="ic"><use href="#star"/></svg></button><button><svg class="ic"><use href="#cols"/></svg></button><button><svg class="ic"><use href="#clip"/></svg></button><button><svg class="ic"><use href="#bank"/></svg></button><button><svg class="ic"><use href="#bank2"/></svg></button><button><svg class="ic"><use href="#link"/></svg></button><button><svg class="ic"><use href="#screen"/></svg></button><button><svg class="ic"><use href="#cam"/></svg></button><button disabled><svg class="ic"><use href="#tripod"/></svg></button><button disabled><svg class="ic"><use href="#width"/></svg></button><button disabled><svg class="ic"><use href="#vr"/></svg></button></div>
    </div>
  </nav>

  <section class="infobox">
    <p>Main:</p>
    <div class="modes">
      <button class="card"><svg class="wide"><use href="#selmode"/></svg><svg class="ch"><use href="#chevr"/></svg></button>
      <button class="card"><svg class="wide"><use href="#selmarq"/></svg><svg class="ch"><use href="#chevr"/></svg></button>
      <button class="card solo"><svg class="ic"><use href="#magnet"/></svg></button>
      <button class="card tall"><svg class="ic"><use href="#arrow"/></svg><svg class="ch"><use href="#chevr"/></svg></button>
    </div>
  </section>

  <div class="work">
    <aside class="toolbox">
      <i class="handle"></i>
      <div class="tools pick"><button class="on"><svg class="ic"><use href="#arrow"/></svg></button><button><svg class="ic"><use href="#marq"/></svg></button></div>
      <h2>Design</h2>
      <div class="tools">
        <button><svg><use href="#wall"/></svg></button><button><svg><use href="#slab"/></svg></button>
        <button><svg><use href="#column"/></svg></button><button><svg><use href="#beam"/></svg></button>
        <button><svg><use href="#doorT"/></svg></button><button><svg><use href="#window"/></svg></button>
        <button class="dark"><svg><use href="#chair"/></svg></button><button><svg><use href="#lamp"/></svg></button>
        <button><svg><use href="#roofT"/></svg></button><button><svg><use href="#shell"/></svg></button>
        <button><svg><use href="#stair"/></svg></button><button><svg><use href="#rail"/></svg></button>
        <button><svg><use href="#curtain"/></svg></button><button><svg><use href="#zone"/></svg></button>
        <button><svg><use href="#curt2"/></svg></button><button><svg><use href="#open"/></svg></button>
        <button><svg><use href="#panel"/></svg></button><button><svg><use href="#mesh"/></svg></button>
        <button><svg><use href="#morph"/></svg></button><button><svg><use href="#obj"/></svg></button>
      </div>
      <h2>Viewpoint</h2>
      <div class="tools">
        <button><svg><use href="#section"/></svg></button><button><svg><use href="#elev"/></svg></button>
        <button><svg><use href="#inter"/></svg></button><button><svg><use href="#ballT"/></svg></button>
        <button><svg><use href="#detail"/></svg></button><button><svg><use href="#camT"/></svg></button>
      </div>
      <h2>Document</h2>
      <div class="tools">
        <button><svg><use href="#dim"/></svg></button><button><svg><use href="#level"/></svg></button>
        <button><svg><use href="#radial"/></svg></button><button><svg><use href="#angle"/></svg></button>
        <button class="dark"><svg><use href="#textT"/></svg></button><button class="dark lead"><svg class="half"><use href="#leader"/></svg>A1</button>
        <button><svg><use href="#gridT"/></svg></button><button class="dark"><svg><use href="#change"/></svg></button>
        <button class="dark"><svg><use href="#line"/></svg></button><button class="dark"><svg><use href="#circ"/></svg></button>
        <button class="dark"><svg><use href="#poly"/></svg></button><button class="dark"><svg><use href="#spline"/></svg></button>
        <button class="dark"><svg><use href="#fill"/></svg></button><button class="dark"><svg><use href="#hot"/></svg></button>
        <button class="dark"><svg><use href="#fig"/></svg></button><button class="dark"><svg><use href="#draw"/></svg></button>
      </div>
      <h2 class="shut">Ducts</h2>
      <h2 class="shut">Pipes</h2>
      <h2 class="shut">Cabling</h2>
    </aside>

    <section class="center">
      <div class="tabs">
        <button class="grid4"><svg class="ic"><use href="#views"/></svg></button>
        <button class="tab"><svg class="ic"><use href="#plan"/></svg>[0. GF FLOOR PLAN]</button>
        <button class="tab on"><svg class="ic"><use href="#layout"/></svg>[.5 SMPL - ROOF FLOOR PLAN]</button>
        <button class="tab"><span class="dot"><svg class="ic"><use href="#tower"/></svg></span>[Action Center]</button>
        <button class="tabend"><svg class="ic"><use href="#proj"/></svg><svg class="ch"><use href="#chev"/></svg></button>
      </div>
      <svg class="canvas" viewBox="89 188 754 434" role="img" aria-label="Roof floor plan layout">
        <path d="M89 188h754v434H89z" fill="#c2c2c2"/>
        <path d="M170 188h595v422H170z" fill="#8c8c8c"/>
        <path d="M168 188h595v420H168z" fill="#eee"/>
        <path d="M187 193.500h570v408H187z" fill="#fff" stroke="#8080ff" stroke-width="1.300"/>
        <path d="M191.500 194v407M753.500 194v407" stroke="#f77" stroke-width="1"/>
        <path d="M188 197.500h568M188 598h568" stroke="#f99" stroke-width="2"/>
        <path d="M237.500 194v4M287.500 194v4M338.500 194v4M391.500 194v4M440.500 194v4M493.500 194v4M545.500 194v4M598.500 194v4M651.500 194v4M703.500 194v4M237.500 598v4M290.500 598v4M338.500 598v4M391.500 598v4M440.500 598v4M493.500 598v4M545.500 598v4M598.500 598v4M651.500 598v4M703.500 598v4M187 228.500h5M187 303.500h5M187 377.500h5M187 452.500h5M187 526.500h5M753 303.500h4M753 377.500h4M753 526.500h4M753 459.500h11M658.500 598v10" stroke="#f44"/>
        <path d="M194 201l4 4M198 201l-4 4M656 457l5 5M661 457l-5 5" stroke="#f22"/>
        <path d="M165.500 606.500l4 4M169.500 606.500l-4 4" stroke="#222"/>
        <path d="M471.500 191v3M471.500 395v4M469.500 397h4M471.500 601v3" stroke="#77f"/>
        <path d="M95 397v16M838.500 397v16M459 616.500h16" stroke="#f0a060" stroke-width="1.500" stroke-dasharray="3 1"/>

        <!-- upper plan, drawn in thirds of a unit -->
        <g transform="translate(180 170) scale(.33333)" fill="none">
          <path d="M48 98H1339V629H48z" stroke="#ccc" stroke-width="3" stroke-dasharray="3 9"/>
          <path d="M78 646H1339" stroke="#444" stroke-width="3"/>
          <path d="M88 639h115" stroke="#999" stroke-width="5"/>
          <path d="M60 645h14M88 649h25" stroke="#e88" stroke-width="6"/>
          <path d="M133 152V545M196 152V545M259 152V545M322 152V545M385 152V545M448 152V545M511 152V545M574 152V545M637 152V545M701 152V545M764 152V545M827 152V545M890 152V545M953 152V545M1016 152V545M1079 152V545M1142 152V545M58 201H1197M58 314H1197M58 411H1197M58 467H1197M58 525H1197" stroke="#3d8248" stroke-width="3" stroke-dasharray="14 3"/>
          <path d="M133 157H1142M133 162H1142M64 201V525M70 201V525" stroke="#6f8f74" stroke-width="2"/>
          <g class="slopes">
            <path class="h" d="M119 187H462L386 262H194ZM119 358L194 283H257L182 358ZM182 482L259 406 335 482ZM259 319H386L417 349 372 394H335ZM372 538L447 463H575L651 538ZM417 376L462 331H498L575 406H447ZM498 187H778L701 262H575ZM575 319H701L733 349 688 394H651ZM688 538L763 463H892L967 538ZM733 376L778 331H813L890 406H763ZM813 187H1157L1080 262H890ZM890 319H1080L1003 394H967ZM1003 482L1080 406 1157 482Z"/>
            <path class="v" d="M119 187L194 262V283L119 358ZM462 187V331L417 376V349L386 319V262ZM257 283L182 358V482L259 406V283ZM259 319L335 394V482L259 406ZM372 394L417 349V376L447 406V463L372 538ZM651 538L575 463V319L651 394ZM498 187L575 262V406L498 331ZM778 187V331L733 376V349L701 319V262ZM688 394L733 349V376L763 406V463L688 538ZM967 538L892 463V319L967 394ZM813 187L890 262V406L813 331ZM1157 187V482L1080 406V262ZM1003 394L1080 319V406L1003 482Z"/>
          </g>
          <path d="M133 187V358M196 187V262M196 300V482M259 187V262M322 187V262M322 319V380M385 187V262M448 360V406M448 463V538M511 331V406M511 463V538M574 210V538M637 187V262M701 187V262M764 463V538M827 331V406M827 463V538M953 187V262M1016 187V262M1079 187V482M1142 187V482M119 201H462M498 201H778M813 201H1157M119 314H190M390 314H462M498 314H572M182 411H259M372 411H446M372 467H446M182 467H335M688 467H762M1003 467H1157" stroke="#2c7a44" stroke-width="2" stroke-dasharray="9 3"/>
          <path d="M288 409h32v40h-32z" fill="#fff" stroke="#a8d4e0" stroke-width="6"/>
          <path d="M1016 407h44v58h-44z" fill="#fff"/>
          <path d="M1022 439h33v27h-33z" fill="#52934f" stroke="#8cc" stroke-width="5"/>
          <path d="M1026 462l20-18M1028 446h22" stroke="#0b5a5a" stroke-width="3"/><path d="M1046 440l18-20" stroke="#6ee" stroke-width="2"/>
          <path d="M259 468v18M511 520v18M985 187v18M985 378v18M827 520v18M1080 466v18M813 273h18M1139 273h18" stroke="#e22" stroke-width="4"/>
          <g stroke="#2a4a2e" stroke-width="3" fill="#fff"><use href="#row9" x="133" y="147"/><use href="#row9" x="637" y="147"/><use href="#bub" x="1142" y="147"/><use href="#bub" x="53" y="201"/><use href="#bub" x="53" y="314"/><use href="#bub" x="53" y="411"/><use href="#bub" x="53" y="467"/><use href="#bub" x="53" y="525"/><use href="#bub" x="173" y="434"/><use href="#bub" x="173" y="445"/><use href="#bub" x="276" y="513"/><use href="#bub" x="1182" y="426"/><use href="#bub" x="1182" y="436"/><use href="#bub" x="1081" y="504"/><path d="M276 508q-2-14 10-24M1178 426h-10l-10-8M1178 436h-10l-10-5M1081 500V482M178 434h18" fill="none" stroke-width="2"/><path d="M1158 418H1060M1158 431H1080" stroke="#2c7a44" fill="none" stroke-width="2"/></g>
        </g>

        <!-- lower plan -->
        <g transform="translate(180 385) scale(.33333)" fill="none">
          <path d="M48 43H1339V575H48z" stroke="#ccc" stroke-width="3" stroke-dasharray="3 9"/>
          <path d="M78 592H1339" stroke="#444" stroke-width="3"/>
          <path d="M88 585h115" stroke="#999" stroke-width="5"/>
          <path d="M60 591h14M88 595h25" stroke="#e88" stroke-width="6"/>
          <path d="M133 104H1268" stroke="#c5d0c6" stroke-width="9"/>
          <path d="M133 99H1268M133 109H1268M64 146V470M70 146V470" stroke="#7f9a84" stroke-width="2"/>
          <path d="M133 96V493M196 96V493M259 96V493M322 96V493M385 96V493M448 96V493M511 96V493M574 96V493M637 96V493M701 96V493M764 96V493M827 96V493M890 96V493M953 96V493M1016 96V493M1079 96V493M1142 96V493M1205 96V493M1268 96V493M58 146H1304M58 202H1304M58 260H1304M58 356H1304M58 414H1304M58 470H1304M570 176h54M380 438h56" stroke="#3d8248" stroke-width="3" stroke-dasharray="14 3"/>
          <g class="slopes">
            <path class="h" d="M119 188H272L195 264ZM195 352L272 277H307L352 322 322 352ZM119 485L195 410H322L398 485ZM307 133H587L511 208H383ZM352 295L383 265H511L433 340H398ZM511 352L587 277H623L667 322 638 352ZM433 485L508 410H638L713 485ZM623 133H902L826 208H698ZM778 228H826L902 303H778ZM667 295L698 262H777V340H713Z"/>
            <path class="v" d="M119 188L195 264V410L119 485ZM272 188V277L195 352V264ZM398 485L322 410V352L352 322V295L398 340ZM307 133L383 208V265L352 295V322L307 277ZM587 133V277L511 352V208ZM433 340L511 265V410L433 485ZM713 485L638 410V352L667 322V295L713 340ZM623 133L698 208V265L667 295V322L623 277ZM902 133V303L826 228V208Z"/>
          </g>
          <path d="M133 188V485M196 188V485M259 290V350M259 412V485M322 140V485M385 133V208M385 270V480M448 133V208M448 265V485M511 133V485M574 140V350M574 412V485M637 412V485M701 133V485M764 133V208M764 262V340M890 133V303M119 202H272M119 260H272M119 356H194M119 414H398M119 470H398M307 146H587M307 202H380M307 260H380M433 356H511M433 414H713M433 470H713M623 146H902M640 356H713M830 260H902" stroke="#2c7a44" stroke-width="2" stroke-dasharray="9 3"/>
          <path d="M195 352H322M383 208H511M383 265H511M508 352H638V410H508ZM698 208h68" stroke="#2bb" stroke-width="3"/>
          <path d="M216 226h44v39h-44z" fill="#fff" stroke="#267a5a" stroke-width="2"/>
          <path d="M222 205h35v24h-35z" stroke="#9ac8dc" stroke-width="5"/><path d="M236 222l14-12M232 210h22" stroke="#0b5a5a" stroke-width="3"/>
          <path d="M281 286v17M137 326h17M328 228h17M451 142v17M415 304v17M364 380h17M281 448v17M553 228h17M593 297v17M453 371h17M541 448v17M642 228h17M678 371h17M767 142v17M730 304v17M868 229h17" stroke="#e22" stroke-width="4"/>
          <path d="M940 132H1220V343H1282V436H1129V340H1093V484H751V340M940 132V277H902M940 132L1017 208M1220 132L1145 208M1017 206H1145V266H1017ZM1015 206V404M1020 206V404M827 350H1015M827 404H1015M827 345V406M940 277L1017 350M751 484L827 406M1093 484L1018 408M1020 266L1093 340M1145 266L1175 294V388M1175 294L1129 340M1175 388H1235L1282 343M1235 388L1282 436M1129 436L1175 388 1220 343M780 303L827 350" stroke="#8ff" stroke-width="3"/>
          <g stroke="#2a4a2e" stroke-width="3" fill="#fff"><use href="#row9" x="133" y="91"/><use href="#row9" x="637" y="91"/><use href="#bub" x="1142" y="91"/><use href="#bub" x="1205" y="91"/><use href="#bub" x="1268" y="91"/><use href="#bub" x="53" y="146"/><use href="#bub" x="53" y="202"/><use href="#bub" x="53" y="212"/><use href="#bub" x="53" y="225"/><use href="#bub" x="53" y="260"/><use href="#bub" x="53" y="356"/><use href="#bub" x="53" y="414"/><use href="#bub" x="53" y="470"/><use href="#bub" x="1333" y="366"/><use href="#bub" x="1333" y="385"/><use href="#bub" x="1333" y="402"/><use href="#bub" x="1221" y="450"/><path d="M1304 356l10 10h14M1304 394l11-9h12M1304 406l11-4h12M1216 423l5 10v12" fill="none" stroke-width="3"/><path d="M58 214h14l6-6h150M58 225h14l6-5h130" fill="none" stroke="#3d8248" stroke-width="2"/><path d="M1195 394h110M1195 406h110M1216 343v80" fill="none" stroke-width="3" stroke-dasharray="12 3"/></g>
        </g>

        <!-- title block -->
        <g transform="translate(640 380) scale(.33333)" fill="none" stroke="#f44" stroke-width="3">
          <path d="M239 262v390M246 25v627" stroke="#fbb" stroke-width="9"/><path d="M234 36v616M244 25v627M252 120v532" stroke="#f88" stroke-width="2"/>
          <path d="M256 26h82v50h-82z" fill="#f99"/><path d="M256 34h82M256 42h82M256 50h82M256 58h82M256 66h82M267 26v50M279 26v50M311 26v50" stroke-width="2"/>
          <path d="M256 70V652M340 0V652M256 76h84M256 145h84M256 170h84M256 206h84M256 217h84M256 304h84M256 355h84M256 455h84M256 559h84M256 567h84M265 145v72M303 212v92M271 355v204"/>
          <path d="M267 95v45M273 88v52M279 80v60M286 95v45M274 152v62M282 152v62M290 152v62M298 152v62M267 250v45M278 282v15M287 230v60M314 222v68M320 230v60M267 415v40M278 430v25M262 480v25M268 515v35M278 540v15M286 500v52M294 498v55" stroke="#f99" stroke-width="3"/>
          <circle cx="317" cy="97" r="17" stroke="#f88"/><circle cx="317" cy="97" r="10" stroke="#faa"/>
          <path d="M262 309h28v42h-28z" fill="#f22"/><path d="M267 325h18M267 338h18" stroke="#faa" stroke-width="2"/>
          <path d="M295 321h36M303 312h28M300 330h30M305 338h26M302 347h28" stroke="#f99" stroke-width="2"/>
          <path d="M277 359h56v58h-56z" fill="#f99" stroke="#f88"/><path d="M288 391h35M294 396h22M304 382h3" stroke="#fff" stroke-width="2"/>
          <path d="M256 571h84M256 583h84M256 598h84M256 622h84" stroke-width="3"/><path d="M258 577h60M262 590h70M270 605h60M258 612h50M275 630h60" stroke="#f99" stroke-width="2"/>
          <path d="M256 563h82" stroke-width="7" stroke="#f22"/>
          <path d="M255 636h84v17h-84z" fill="#f00" stroke="#f00"/><path d="M290 644h12" stroke="#faa" stroke-width="7"/>
        </g>
        <path d="M658 610h63v12h-63z" fill="#fff"/>
        <g fill="none" stroke="#f55"><circle cx="665.500" cy="616.500" r="5.500" stroke-dasharray="2 .5"/><circle cx="665.500" cy="616.500" r="3" stroke="#fbb"/><path d="M664 614v4h4" stroke="#f99"/><circle cx="681.500" cy="616.500" r="5.800" stroke-dasharray="2 .5"/><circle cx="681.500" cy="616.500" r="4" fill="#f55" stroke="#f55"/><path d="M676 619l11-5" stroke="#c22" stroke-width="2.500"/><path d="M678 618l7-3" stroke="#fcc" stroke-width=".7"/><circle cx="697.500" cy="616.500" r="5.500" stroke-dasharray="2 .5"/><path d="M691 619l13-5" stroke="#e33" stroke-width="3"/><circle cx="713.500" cy="616.500" r="5.500" stroke-dasharray="2 .5"/><path d="M707 619l13-5" stroke="#f66" stroke-width="2.500"/><path d="M709 618l9-3" stroke="#fdd" stroke-width=".7"/></g>
      </svg>
      <div class="quick">
        <button><svg class="ic"><use href="#undo"/></svg></button><button disabled><svg class="ic"><use href="#redo"/></svg></button><button><svg class="ic"><use href="#zin"/></svg></button>
        <i class="sep"></i>
        <div class="pager"><button><svg class="ic"><use href="#tril"/></svg></button><span>47/48</span><button><svg class="ic"><use href="#trir"/></svg></button></div>
        <i class="sep"></i>
        <button class="q zoomq"><svg class="ic"><use href="#zfit"/></svg><span>24%</span><svg class="ch"><use href="#chevr"/></svg></button>
        <button class="q" disabled><svg class="ic"><use href="#rot"/></svg><span>N/A</span><svg class="ch"><use href="#chevr"/></svg></button>
        <button class="q" disabled><svg class="ic"><use href="#ruler"/></svg><span>N/A</span><svg class="ch"><use href="#chevr"/></svg></button>
        <button class="q"><svg class="ic"><use href="#layers"/></svg><span>Custom</span><svg class="ch"><use href="#chevr"/></svg></button>
        <button class="q" disabled><svg class="ic"><use href="#tiles"/></svg><span>N/A</span><svg class="ch"><use href="#chevr"/></svg></button>
        <button class="q"><svg class="ic"><use href="#pen"/></svg><span>Color set</span><svg class="ch"><use href="#chevr"/></svg></button>
        <button class="q" disabled><svg class="ic"><use href="#pens"/></svg><span>N/A</span><svg class="ch"><use href="#chevr"/></svg></button>
        <button class="q" disabled><svg class="ic"><use href="#disk"/></svg><span>N/A</span><svg class="ch"><use href="#chevr"/></svg></button>
        <button class="q" disabled><svg class="ic"><use href="#person"/></svg><span>N/A</span><svg class="ch"><use href="#chevr"/></svg></button>
        <button class="q" disabled><svg class="ic"><use href="#stack"/></svg><span>N/A</span><svg class="ch"><use href="#chevr"/></svg></button>
        <button class="q" disabled><svg class="ic"><use href="#width"/></svg><span>N/A</span><svg class="ch"><use href="#chevr"/></svg></button>
      </div>
    </section>

    <aside class="navigator">
      <i class="handle"></i>
      <div class="maps">
        <button><svg class="ic"><use href="#proj"/></svg></button><i class="sep"></i><button><svg class="ic"><use href="#vmap"/></svg></button><button><svg class="ic"><use href="#lbook"/></svg></button><button class="on"><svg class="ic"><use href="#pubs"/></svg></button>
        <button class="card more"><svg class="ic"><use href="#menu"/></svg><svg class="ch"><use href="#chevr"/></svg></button>
      </div>
      <div class="chooser">
        <button class="card"><svg class="ic"><use href="#up"/></svg></button>
        <button class="card set"><svg class="ic"><use href="#pubs"/></svg><span>Coordination Smpl bac...</span><svg class="ch"><use href="#chevr"/></svg></button>
      </div>
      <label class="search"><svg class="ic"><use href="#mag"/></svg><input type="text" placeholder="Search 'Coordination Smpl" aria-label="Search"></label>
      <ul class="files">
        <li><svg><use href="#dwg"/></svg>.1 SMPL - GARAGE FLOOR PLAN</li>
        <li><svg><use href="#dwg"/></svg>.2 SMPL - GROUND FLOOR PLAN</li>
        <li><svg><use href="#dwg"/></svg>.3 SMPL - SECOND FLOOR PLAN</li>
        <li><svg><use href="#dwg"/></svg>.4 SMPL - THIRD FLOOR PLAN</li>
        <li><svg><use href="#dwg"/></svg>.5 SMPL - ROOF FLOOR PLAN</li>
      </ul>
      <div class="acts"><button><svg class="ic"><use href="#newf"/></svg></button><button class="del"><svg class="ic"><use href="#cross"/></svg></button></div>
      <h2 class="shut">Properties</h2>
      <h2>Format</h2>
      <div class="pick-format"><select aria-label="Format" disabled><option></option></select><svg class="ch"><path d="M1.500 2L3 .5 4.500 2M1.500 4L3 5.500 4.500 4"/></svg></div>
      <div class="publish"><button class="card" disabled>Publish</button><button><svg class="ic"><use href="#tree"/></svg><svg class="ch"><use href="#chevr"/></svg></button></div>
    </aside>
  </div>

  <section class="coords">
    <i class="grip"></i>
    <button class="card sq"><svg class="ic"><use href="#xmark"/></svg></button>
    <button class="card sq"><svg class="ic"><use href="#snap"/></svg></button>
    <button class="card two"><svg class="ic"><use href="#origin"/></svg><svg class="ch"><use href="#chevr"/></svg></button>
    <button class="card two"><svg class="ic"><use href="#plus"/></svg><svg class="ch"><use href="#chevr"/></svg></button>
    <i class="sep"></i>
    <button class="delta"><svg class="ic"><use href="#delta"/></svg></button>
    <div class="pair"><label for="dx">Δx:</label><input id="dx" value="122.94"><label for="dy">Δy:</label><input id="dy" value="32.27"></div>
    <i class="sep"></i>
    <button class="delta"><svg class="ic"><use href="#delta"/></svg></button>
    <div class="pair"><label for="dr">Δr:</label><input id="dr" value="127.10"><label for="da">a:</label><input id="da" value="14.71°"></div>
    <i class="sep"></i>
    <button class="card two" disabled><svg class="ic"><use href="#slash"/></svg><svg class="ch"><use href="#chevr"/></svg></button>
    <div class="zed"><div><label for="dz">Δz:</label><input id="dz" value="0.00" disabled></div><div><span>to Project Zero</span><button class="card" disabled><svg class="ch"><use href="#chevr"/></svg></button></div></div>
    <i class="sep"></i>
    <div class="duo"><button class="press"><svg class="ic"><use href="#set"/></svg></button><button class="card nar"><svg class="ch"><use href="#chevr"/></svg></button></div>
    <i class="sep"></i>
    <button class="flat two"><svg class="ic"><use href="#check"/></svg><svg class="ch"><use href="#chevr"/></svg></button>
    <button class="card two" disabled><svg class="ic"><use href="#path"/></svg><svg class="ch"><use href="#chevr"/></svg></button>
    <button class="card two"><svg class="ic"><use href="#move"/></svg><svg class="ch"><use href="#chevr"/></svg></button>
    <button class="card sq"><svg class="ic"><use href="#wand"/></svg></button>
    <i class="sep"></i>
    <div class="duo"><button class="press"><svg class="ic"><use href="#sloped"/></svg></button><button class="card nar"><svg class="ch"><use href="#chevr"/></svg></button></div>
    <div class="half-div"><div><label for="div">Half</label><button class="card"><svg class="ch"><use href="#chevr"/></svg></button></div><input id="div" value="2" disabled></div>
    <button class="card wide-btn" disabled>OK</button>
    <button class="card wide-btn" disabled>Cancel</button>
    <div class="eyes"><svg class="ic"><use href="#eyes"/></svg><svg class="ic"><use href="#locks"/></svg></div>
    <div class="lay"><span>Selection's</span><div class="dim"><svg class="ic"><use href="#eye"/></svg><svg class="ic"><use href="#lock"/></svg><svg class="ic"><use href="#unlock"/></svg></div></div>
    <div class="lay all"><span>All Layers:</span><div><svg class="ic"><use href="#eye"/></svg><svg class="ic"><use href="#lock"/></svg></div></div>
    <div class="lay dim last"><svg class="ic"><use href="#redo"/></svg><svg class="ic"><use href="#undo"/></svg></div>
  </section>

  <footer class="status">
    <span>Click an Element or Draw a Selection Area. Press and Hold Ctrl+Shift to Toggle Element/Sub-Element Selection.</span>
    <span class="save">Saving to Recovery File pending:</span>
    <svg class="ic"><use href="#copy"/></svg>
    <i class="sep"></i>
    <span class="brand"><b>GRAPHISOFT</b> ID</span>
  </footer>
</main>
</body>
</html>
```
FILE: styles.css
```css
* { box-sizing: border-box; }
body {
  margin: 0; height: 100vh; padding: 24px 34px 45px;
  background: #fff; color: #262626;
  font-family: Roboto, "Liberation Sans", sans-serif; font-size: 7px; line-height: 9px;
}
.defs { position: absolute; width: 0; height: 0; }
h1, h2, p, ul { margin: 0; padding: 0; font-size: inherit; }
button { font: inherit; color: inherit; background: none; border: 0; padding: 0; margin: 0; display: flex; align-items: center; justify-content: center; white-space: nowrap; }
input, select { font: inherit; color: inherit; border: 0; padding: 0; margin: 0; min-width: 0; outline: 0; }
svg { fill: none; stroke: #46525a; stroke-width: .8; flex: none; }
.ic { width: 12px; height: 12px; }
.ch { width: 6px; height: 6px; stroke: #222; }
.b { stroke: #4a90f5; }
.f { fill: #d3e4fc; }
.g { stroke: #2cb35a; }
.o { stroke: #e98b3e; }
.pale { opacity: .4; }
button:disabled svg { opacity: .45; }
button.mid:disabled svg { opacity: .7; }
.sep { width: 1px; align-self: stretch; margin: 4px 0; background: #d6d6d6; flex: none; }
.grip { width: 1px; height: 9px; background: #bbb; flex: none; }

.window {
  display: flex; flex-direction: column; height: 100%; overflow: hidden;
  background: #ebebeb; border-radius: 9px;
  box-shadow: 0 0 1px rgba(0,0,0,.5), 0 12px 22px rgba(0,0,0,.38), 0 2px 8px rgba(0,0,0,.12);
}
.titlebar { display: flex; align-items: center; gap: 5px; height: 17px; flex: none; padding: 0 41px 0 5px; background: #f3f3f3; border-bottom: 1px solid #d8d8d8; }
.light { width: 7px; height: 7px; border-radius: 50%; }
.red { background: #fe5f57; } .yellow { background: #febc2e; } .green { background: #28c840; }
.titlebar h1 { flex: 1; display: flex; align-items: center; justify-content: center; gap: 2px; font: 600 8px/9px Inter, "Liberation Sans", sans-serif; color: #3a3a3a; }
.titlebar .ic { width: 9px; height: 9px; }

.toolbar { display: flex; align-items: center; height: 21px; flex: none; background: #efefef; padding-left: 2px; }
.toolbar button { width: 18px; height: 18px; }
.toolbar .wide-sep { margin: 4px 2px; }
.group { display: flex; }
.start { margin-left: 3px; margin-right: 4px; }
.model { margin: 0 2px; }
.spread { flex: 1; justify-content: space-between; padding: 0 1px 0 2px; }
.toolbar .drop { width: auto; gap: 5px; padding: 0 3px; }
.toolbar .drop span { padding-top: 2px; }
.toolbar.second { height: 22px; padding: 0; background: #e4e4e4; }
.toolbar.second .drop { gap: 4px; }
.strip { display: flex; align-items: center; height: 100%; background: #ededed; padding-left: 3px; padding-right: 1px; }
.toolbar .pad { width: 24px; }
.toolbar .spell { color: #888; padding: 0 5px 0 1px; }

.infobox { flex: none; height: 91px; padding: 1px 5px; border-left: 1px solid #ddd; }
.infobox p { font-size: 6px; margin-bottom: 6px; }
.modes { display: flex; gap: 1px; align-items: flex-end; }
.card { background: #fff; border-radius: 3px; box-shadow: 0 0 1px rgba(0,0,0,.35); }
.card:disabled { background: #f1f1f1; color: #aaa; }
.modes .card { height: 12px; width: 25px; gap: 3px; }
.modes .card.tall { width: 29px; height: 17px; gap: 8px; }
.wide { width: 14px; height: 10px; }

.work { display: flex; flex: 1; min-height: 0; }
.toolbox { width: 55px; flex: none; background: #ececec; padding: 2px 1px 0 1px; border-right: 1px solid #ddd; }
.handle { display: block; width: 22px; height: 1px; background: #aaa; margin: 0 auto 2px; }
.tools { display: grid; grid-template-columns: 1fr 1fr; grid-auto-rows: 17px; padding-bottom: 1px; }
.tools button svg { width: 16px; height: 14px; stroke: #899095; }
.tools .dark svg { stroke: #3c474e; }
.tools.pick { grid-auto-rows: 15px; padding-bottom: 2px; }
.tools.pick .on { background: #c4c4c9; border-radius: 3px; margin-right: 2px; }
.tools.pick button svg { width: 12px; height: 12px; stroke: #39454d; }
.tools .lead { font-size: 9px; gap: 0; }
.tools .lead svg.half { width: 7px; }
h2 { display: flex; align-items: center; height: 12px; background: #d9d9d9; font-size: 7px; font-weight: 500; }
h2::before { content: ""; border: 3px solid transparent; border-top: 5px solid #8b8b8b; border-bottom: 0; margin: 0 4px 0 2px; }
h2.shut::before { border: 2px solid transparent; border-left: 4px solid #8b8b8b; border-right: 0; margin: 0 4px 0 4px; }
.toolbox h2.shut { margin-bottom: 1px; }

.center { flex: 1; min-width: 0; display: flex; flex-direction: column; background: #c2c2c2; }
.tabs { display: flex; height: 13px; flex: none; background: #e4e4e4; }
.tabs .grid4 { width: 20px; border-right: 1px solid #ccc; background: #ebebeb; }
.tab { flex: 0 1 182px; gap: 2px; border-right: 1px solid #d0d0d0; color: #444; }
.tab.on { background: #fff; }
.dot { position: relative; display: flex; }
.dot::after { content: ""; position: absolute; right: 0; top: 0; width: 3px; height: 3px; border-radius: 50%; background: #f43; }
.tabend { margin-left: auto; width: 30px; gap: 3px; background: #f4f4f4; }
.canvas { flex: 1; width: 100%; min-height: 0; display: block; stroke: none; }
.slopes path { stroke: #14625a; stroke-width: 3; }
.slopes .h { fill: url(#hh); }
.slopes .v { fill: url(#hv); }
.quick { display: flex; align-items: center; height: 14px; flex: none; background: #ebebeb; }
.quick > button { width: 14px; height: 14px; }
.quick .sep { margin: 2px; }
.pager { display: flex; align-items: center; justify-content: space-between; width: 81px; color: #777; }
.quick > .q { flex: 1 1 0; width: auto; padding: 0 2px 0 4px; justify-content: space-between; }
.quick > .zoomq { flex: 0 0 54px; }
.q:disabled { color: #aaa; }
.q .ic { width: 11px; height: 11px; }

.navigator { width: 122px; flex: none; display: flex; flex-direction: column; background: #ebebeb; padding-top: 2px; overflow: hidden; }
.navigator .handle { width: 43px; margin: 0 auto 2px; flex: none; }
.maps { display: flex; align-items: center; height: 18px; flex: none; padding-left: 3px; }
.maps button { width: 18px; height: 16px; }
.maps .sep { margin: 2px 3px; }
.maps .on { background: #c4c4c9; border-radius: 3px; }
.maps .more { margin-left: auto; width: 22px; height: 13px; }
.chooser { display: flex; gap: 2px; height: 14px; flex: none; margin: 3px 1px 2px 3px; }
.chooser button { width: 13px; height: 14px; }
.chooser .set { flex: 1; padding: 0 0 0 2px; gap: 2px; }
.chooser .set span { margin-left: auto; }
.search { display: flex; align-items: center; gap: 3px; height: 12px; flex: none; margin: 0 2px 2px 3px; padding-left: 4px; background: #fff; box-shadow: 0 1px 1px rgba(0,0,0,.2); }
.search .ic { width: 9px; height: 9px; }
.search input { flex: 1; background: none; }
.search input::placeholder { color: #bbb; }
.files { flex: 1; min-height: 0; list-style: none; background: #fff; padding-left: 12px; }
.files li { display: flex; align-items: center; gap: 3px; height: 15px; white-space: nowrap; color: #111; }
.files svg { width: 11px; height: 13px; }
.acts { display: flex; gap: 6px; height: 20px; flex: none; padding-left: 6px; align-items: center; }
.del svg { stroke: #e9695f; }
.navigator h2 { flex: none; height: 12px; margin-bottom: 4px; margin-left: 3px; }
.pick-format { display: flex; align-items: center; flex: none; height: 12px; margin: 0 2px 0 3px; padding-right: 2px; background: #f7f7f7; border-radius: 3px; box-shadow: 0 0 1px rgba(0,0,0,.25); }
.pick-format select { appearance: none; flex: 1; height: 12px; background: none; }
.pick-format .ch { stroke: #999; }
.publish { flex: none; display: flex; gap: 5px; justify-content: space-between; margin: 70px 1px 5px 15px; }
.publish .card { flex: 1; max-width: 82px; height: 13px; }

.coords { display: flex; align-items: center; height: 20px; flex: none; gap: 3px; padding: 0 2px; }
.coords .card, .press, .delta { height: 16px; }
.sq { width: 16px; }
.two { width: 25px; gap: 3px; }
.nar { width: 8px; }
.delta, .press { background: #bfbfc3; border-radius: 3px; width: 16px; }
.delta { width: 8px; }
.duo { display: flex; gap: 1px; }
.pair { display: grid; grid-template-columns: 15px 55px; grid-auto-rows: 9px; gap: 0 2px; text-align: right; }
.pair label, .zed label { font-weight: 600; }
.pair input { background: #fff; text-align: left; padding-left: 1px; }
.zed { width: 70px; color: #888; padding-left: 3px; }
.zed div { display: flex; align-items: center; height: 9px; gap: 3px; justify-content: space-between; }
.zed input { width: 54px; background: #f3f3f3; color: #aaa; }
.coords .zed .card { height: 9px; width: 10px; }
.half-div { width: 57px; }
.half-div div { display: flex; justify-content: space-between; height: 9px; }
.coords .half-div .card { height: 9px; width: 10px; }
.half-div input { display: block; width: 42px; height: 9px; background: #f3f3f3; color: #aaa; }
.wide-btn { width: 40px; }
.eyes { display: flex; gap: 6px; margin-left: 8px; }
.lay { margin-left: 4px; }
.lay.all { margin-left: 16px; }
.lay div { display: flex; gap: 8px; padding-left: 3px; }
.lay .ic { width: 9px; height: 9px; display: block; }
.dim svg { opacity: .5; }
.coords .last { margin: 0 52px 0 auto; }
.status { display: flex; align-items: center; height: 15px; flex: none; padding: 0 7px 0 4px; gap: 5px; }
.save { margin-left: auto; }
.brand { font-size: 8px; font-family: Inter, "Liberation Sans", sans-serif; color: #333; }
.brand b { font-weight: 600; }
```
